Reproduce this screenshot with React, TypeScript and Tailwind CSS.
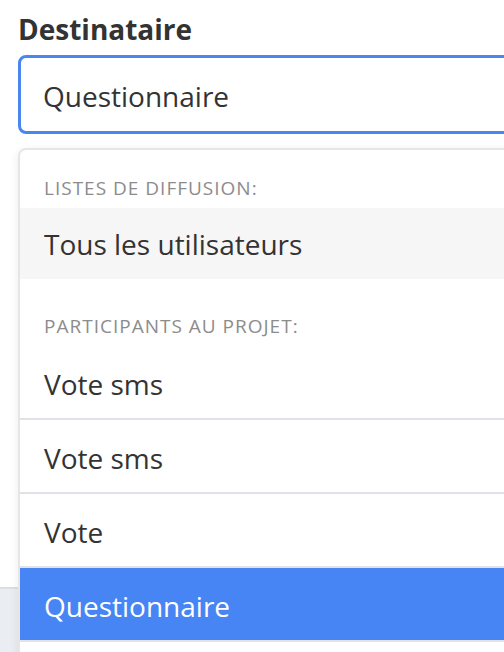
import React from "react";

const font = { fontFamily: '"Open Sans", "Noto Sans", sans-serif' };

function Row({ label, active, border = true }: { label: string; active?: boolean; border?: boolean }) {
  return (
    <div
      className={
        "pl-[24px] pt-[18px] pb-[14px] h-[74px] text-[28px] leading-[40px] " +
        (active ? "bg-[#4785f4] text-white " : "text-[#333333] ") +
        (border ? "border-b-2 border-[#dfe2e6]" : "")
      }
    >
      {label}
    </div>
  );
}

export default function App() {
  return (
    <div className="relative w-[504px] h-[652px] overflow-hidden bg-white" style={font}>
      <div className="flex flex-col h-full">
        <div className="px-[18px] pt-[9px]">
          <div className="text-[28px] leading-[40px] font-bold text-[#333333]">Destinataire</div>
          <div className="mt-[6px] w-[560px] h-[79px] rounded-[8px] border-[3px] border-[#4a86f0] pl-[22px] pt-[18px] text-[28px] leading-[40px] text-[#333333]">
            Questionnaire
          </div>
        </div>
        <div className="flex-1" />
        <div className="h-[65px] border-t-2 border-[#dadee3] bg-[#eaedf1]" />
      </div>

      <div className="absolute left-[18px] top-[148px] w-[560px] rounded-[8px] border-2 border-[#e6e6e6] bg-white shadow-[0_2px_10px_rgba(0,0,0,0.08)] overflow-hidden">
        <div className="pl-[24px] pt-[26px] pb-[8px] text-[19px] leading-[24px] tracking-[1px] text-[#8c8c8c]">LISTES DE DIFFUSION:</div>
        <div className="bg-[#f6f6f6] pl-[24px] pt-[16px] pb-[15px] text-[28px] leading-[40px] text-[#333333]">
          Tous les utilisateurs
        </div>
        <div className="pl-[24px] pt-[35px] pb-[8px] text-[19px] leading-[24px] tracking-[1px] text-[#8c8c8c]">PARTICIPANTS AU PROJET:</div>
        <Row label="Vote sms" />
        <Row label="Vote sms" />
        <Row label="Vote" />
        <Row label="Questionnaire" active />
        <div className="h-[74px] bg-white" />
      </div>
    </div>
  );
}
